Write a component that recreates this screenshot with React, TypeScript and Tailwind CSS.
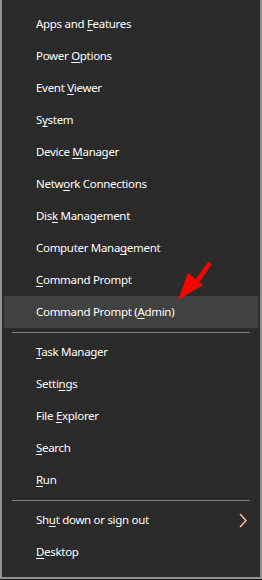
import React from "react";

type Item = { pre: string; key: string; post: string; highlight?: boolean; chevron?: boolean };

const group1: Item[] = [
  { pre: "Apps and ", key: "F", post: "eatures" },
  { pre: "Power ", key: "O", post: "ptions" },
  { pre: "Event ", key: "V", post: "iewer" },
  { pre: "S", key: "y", post: "stem" },
  { pre: "Device ", key: "M", post: "anager" },
  { pre: "Netw", key: "o", post: "rk Connections" },
  { pre: "Dis", key: "k", post: " Management" },
  { pre: "Computer Mana", key: "g", post: "ement" },
  { pre: "", key: "C", post: "ommand Prompt" },
  { pre: "Command Prompt (", key: "A", post: "dmin)", highlight: true },
];
const group2: Item[] = [
  { pre: "", key: "T", post: "ask Manager" },
  { pre: "Setti", key: "n", post: "gs" },
  { pre: "File ", key: "E", post: "xplorer" },
  { pre: "", key: "S", post: "earch" },
  { pre: "", key: "R", post: "un" },
];
const group3: Item[] = [
  { pre: "Sh", key: "u", post: "t down or sign out", chevron: true },
  { pre: "", key: "D", post: "esktop" },
];

function Row({ item }: { item: Item }) {
  return (
    <div
      className={`mx-[2px] h-8 flex items-center pl-[32px] pr-[10px] ${item.highlight ? "bg-[#414141]" : ""}`}
    >
      <span className="flex-1 text-white text-[11.5px] leading-none tracking-[-0.3px]">
        {item.pre}
        <span className="underline underline-offset-[2px] decoration-[1px]">{item.key}</span>
        {item.post}
      </span>
      {item.chevron && (
        <svg width="10" height="16" viewBox="0 0 10 16">
          <polyline points="2,2 8,8.5 2,15" fill="none" stroke="#d9824a" strokeWidth="1.8" />
          <polyline points="2,2 8,8.5 2,15" fill="none" stroke="#f2e4da" strokeWidth="0.9" />
        </svg>
      )}
    </div>
  );
}

function Sep() {
  return (
    <div className="h-2 flex items-center px-[10px]">
      <div className="h-px w-full bg-[#7d7d7d]" />
    </div>
  );
}

export default function App() {
  return (
    <div className="w-[262px] h-[580px] bg-[#1f1f1f] relative" style={{ fontFamily: '"Noto Sans", "Open Sans", sans-serif' }}>
      <div className="w-[262px] h-[579px] bg-[#2b2b2b] border-l-2 border-r-2 border-b-2 border-[#929292] pt-2">
        {group1.map((it) => (
          <Row key={it.pre + it.key} item={it} />
        ))}
        <Sep />
        {group2.map((it) => (
          <Row key={it.pre + it.key} item={it} />
        ))}
        <Sep />
        {group3.map((it) => (
          <Row key={it.pre + it.key} item={it} />
        ))}
      </div>
      <svg className="absolute left-[170px] top-[255px]" width="50" height="52" viewBox="0 0 50 52">
        <path d="M40 8 L26 28" stroke="#ff0000" strokeWidth="4.5" strokeLinecap="butt" fill="none" />
        <polygon points="8,45 18,18 33,30" fill="#ff0000" />
      </svg>
    </div>
  );
}
